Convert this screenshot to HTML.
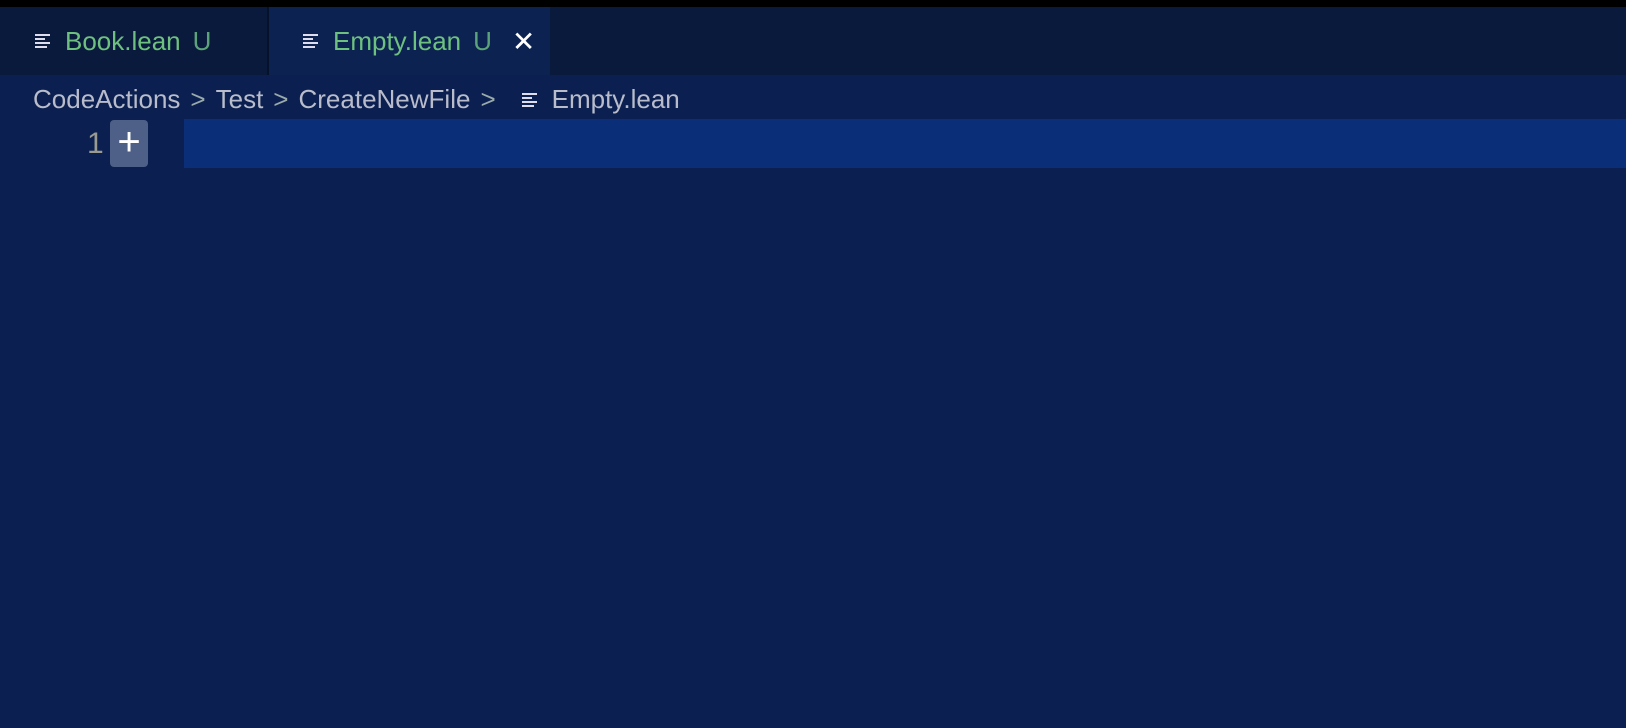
<!DOCTYPE html>
<html><head><style>
body{margin:0;width:1626px;height:728px;background:#0b2050;overflow:hidden;font-family:"Liberation Sans",sans-serif;position:relative}
.top{position:absolute;left:0;top:0;width:1626px;height:7px;background:#000}
.bar{position:absolute;left:0;top:7px;width:1626px;height:68px;background:#0a1a3c}
.tab{position:absolute;top:7px;height:68px;display:flex;align-items:center;font-size:26px}
.t1{left:0;width:267px;background:#0a1a3c;border-right:2px solid #06112a}
.t2{left:269px;width:281px;background:#0c2250}
.ic{display:inline-block;width:15px;height:14px;margin-right:15px;background:
linear-gradient(#dde,#dde) 0 0/15px 2px no-repeat,
linear-gradient(#dde,#dde) 0 4px/10px 2px no-repeat,
linear-gradient(#dde,#dde) 0 8px/15px 2px no-repeat,
linear-gradient(#dde,#dde) 0 12px/12px 2px no-repeat}
.g{color:#6ec07e}.u{color:#5ca37a;margin-left:12px}
.bc{position:absolute;left:33px;top:84px;font-size:26px;color:#b8bccb;display:flex;align-items:center}
.sep{margin:0 10px;color:#9aa}
.hl{position:absolute;left:184px;top:119px;width:1442px;height:49px;background:#0a2f78}
.ln{position:absolute;left:87px;top:127px;font-size:30px;color:#9a9a90}
.plus{position:absolute;left:110px;top:120px;width:38px;height:47px;background:#4e5f88;border-radius:4px;color:#fff;font-size:40px;text-align:center;line-height:44px}
</style></head><body>
<div class="top"></div><div class="bar"></div>
<div class="tab t1"><span style="margin-left:35px" class="ic"></span><span class="g">Book.lean</span><span class="u">U</span></div>
<div class="tab t2"><span style="margin-left:34px" class="ic"></span><span class="g">Empty.lean</span><span class="u">U</span><span style="color:#fff;margin-left:20px;font-size:28px">✕</span></div>
<div class="bc">CodeActions<span class="sep">&gt;</span>Test<span class="sep">&gt;</span>CreateNewFile<span class="sep">&gt;</span><span class="ic" style="margin-left:16px"></span>Empty.lean</div>
<div class="hl"></div>
<div class="ln">1</div>
<div class="plus">+</div>
</body></html>
